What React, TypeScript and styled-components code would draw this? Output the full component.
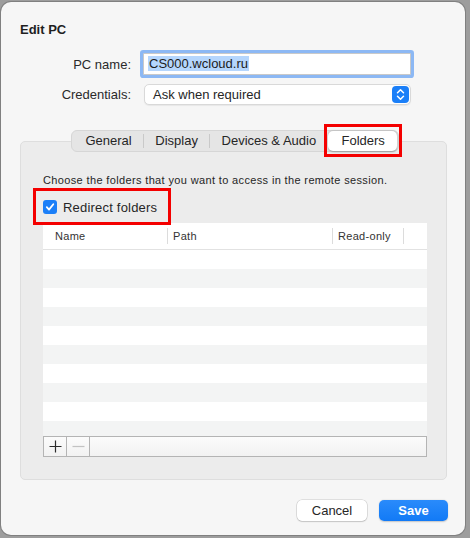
import React from 'react';
import styled, { createGlobalStyle } from 'styled-components';

const GlobalStyle = createGlobalStyle`
  html, body {
    margin: 0;
    padding: 0;
    background: #9d9d9d;
  }
  body {
    font-family: "Liberation Sans", Arial, sans-serif;
    color: #262626;
    -webkit-font-smoothing: antialiased;
  }
  * { box-sizing: border-box; }
`;

const Backdrop = styled.div`
  width: 470px;
  height: 538px;
  padding: 2px 0 0 1px;
`;

const Window = styled.div`
  width: 464px;
  height: 533px;
  background: #f6f6f6;
  border-radius: 10px;
  box-shadow: 0 0 0 1px rgba(0, 0, 0, 0.18);
  padding: 20px 18px 14px 19px;
  display: flex;
  flex-direction: column;
`;

const Title = styled.div`
  font-size: 13px;
  font-weight: 700;
  line-height: 16px;
  color: #1f1f1f;
`;

const Form = styled.div`
  display: grid;
  grid-template-columns: 111px 269px;
  column-gap: 11px;
  row-gap: 9px;
  margin-top: 15px;
  align-items: center;
`;

const Label = styled.div`
  font-size: 13px;
  text-align: right;
  color: #2a2a2a;
`;

const TextField = styled.div`
  height: 22px;
  background: #fff;
  border: 1px solid #c9c9c9;
  box-shadow: 0 0 0 3px #8cb8f4;
  border-radius: 1px;
  margin-left: 1px;
  font-size: 13px;
  line-height: 20px;
  padding-left: 4px;
`;

const Selection = styled.span`
  background: #b5d6fd;
  color: #1c1c1c;
  padding: 0 1px;
`;

const Popup = styled.div`
  height: 21px;
  background: #fff;
  border: 1px solid #d9d9d9;
  border-radius: 5px;
  box-shadow: 0 1px 1px rgba(0, 0, 0, 0.06);
  display: flex;
  align-items: center;
  justify-content: space-between;
  padding: 0 1px 0 8px;
  margin-left: 2px;
  font-size: 13px;
`;

const Stepper = styled.div`
  width: 17px;
  height: 17px;
  border-radius: 4px;
  background: #1b7ff8;
  display: flex;
  align-items: center;
  justify-content: center;
`;

const TabBar = styled.div`
  display: flex;
  justify-content: center;
  margin: 25px 0 -11px 3px;
  position: relative;
  z-index: 1;
`;

const Segmented = styled.div`
  display: flex;
  height: 22px;
  background: #e5e5e5;
  border: 1px solid #d6d6d6;
  border-radius: 6px;
  padding: 0 1px;
  align-items: center;
`;

const Tab = styled.div<{ $selected?: boolean; $divider?: boolean; $marked?: boolean }>`
  position: relative;
  height: ${({ $selected }) => ($selected ? '20px' : '14px')};
  line-height: ${({ $selected }) => ($selected ? '20px' : '14px')};
  padding: 0 ${({ $selected }) => ($selected ? '12px' : '11.3px')};
  font-size: 13px;
  color: #262626;
  border-left: 1px solid ${({ $divider }) => ($divider ? '#c9c9c9' : 'transparent')};
  background: ${({ $selected }) => ($selected ? '#fff' : 'transparent')};
  border-radius: ${({ $selected }) => ($selected ? '5px' : '0')};
  box-shadow: ${({ $selected }) => ($selected ? '0 0.5px 2px rgba(0,0,0,0.3)' : 'none')};
  margin-left: ${({ $selected }) => ($selected ? '1px' : '0')};

  &::after {
    content: '';
    display: ${({ $marked }) => ($marked ? 'block' : 'none')};
    position: absolute;
    inset: -7px -5px -6px -5px;
    border: 3px solid #f40000;
  }
`;

const Panel = styled.div`
  height: 339px;
  background: #ececec;
  border: 1px solid #dedede;
  border-radius: 5px;
  padding: 31px 20px 22px 22px;
  display: flex;
  flex-direction: column;
`;

const Hint = styled.div`
  font-size: 11px;
  line-height: 14px;
  letter-spacing: 0.36px;
  color: #262626;
`;

const CheckRow = styled.label`
  position: relative;
  display: inline-flex;
  align-self: flex-start;
  align-items: center;
  gap: 6px;
  height: 14px;
  margin-top: 13px;
  font-size: 13px;
  letter-spacing: 0.2px;

  &::after {
    content: '';
    position: absolute;
    inset: -12px -14px -11px -10px;
    border: 3px solid #f40000;
  }
`;

const CheckBox = styled.span`
  width: 14px;
  height: 14px;
  border-radius: 3px;
  background: #1b7ff8;
  display: flex;
  align-items: center;
  justify-content: center;
`;

const Table = styled.div`
  margin-top: 9px;
  width: 384px;
  display: flex;
  flex-direction: column;
`;

const HeaderRow = styled.div`
  display: grid;
  grid-template-columns: 124px 165px 71px 1fr;
  align-items: center;
  height: 27px;
  background: #fff;
  border-bottom: 1px solid #e2e2e2;
`;

const HeaderCell = styled.div<{ $divider?: boolean; $pad: number }>`
  height: 16px;
  line-height: 16px;
  font-size: 11px;
  letter-spacing: 0.3px;
  color: #333;
  padding-left: ${({ $pad }) => $pad}px;
  border-left: 1px solid ${({ $divider }) => ($divider ? '#dcdcdc' : 'transparent')};
`;

const Rows = styled.div`
  height: 186px;
  overflow: hidden;
`;

const Row = styled.div<{ $odd: boolean }>`
  height: 19px;
  background: ${({ $odd }) => ($odd ? '#f3f4f4' : '#fff')};
`;

const ToolBar = styled.div`
  display: flex;
  height: 21px;
  border: 1px solid #b4b4b4;
  background: linear-gradient(#fbfbfb, #f2f2f2);
`;

const ToolButton = styled.div`
  width: 23px;
  border-right: 1px solid #b4b4b4;
  display: flex;
  align-items: center;
  justify-content: center;
`;

const Footer = styled.div`
  display: flex;
  justify-content: flex-end;
  gap: 12px;
  margin-top: 20px;
  margin-right: -1px;
`;

const Button = styled.div<{ $primary?: boolean }>`
  width: ${({ $primary }) => ($primary ? '69px' : '70px')};
  height: 21px;
  border-radius: 5px;
  font-size: 13px;
  line-height: 21px;
  text-align: center;
  color: ${({ $primary }) => ($primary ? '#fff' : '#262626')};
  font-weight: ${({ $primary }) => ($primary ? 600 : 400)};
  background: ${({ $primary }) => ($primary ? 'linear-gradient(#2a8bfb, #127af6)' : '#fff')};
  box-shadow: ${({ $primary }) =>
    $primary ? '0 0.5px 1.5px rgba(0,0,0,0.2)' : '0 0 0 0.5px rgba(0,0,0,0.18), 0 1px 1.5px rgba(0,0,0,0.12)'};
`;

const StepperIcon = () => (
  <svg width="9" height="13" viewBox="0 0 9 13">
    <path d="M1.5 4.8 L4.5 1.8 L7.5 4.8 M1.5 8.2 L4.5 11.2 L7.5 8.2" stroke="#fff" strokeWidth="1.5" fill="none" strokeLinecap="round" strokeLinejoin="round" />
  </svg>
);

const CheckIcon = () => (
  <svg width="10" height="10" viewBox="0 0 10 10">
    <path d="M1.8 5.2 L4 7.6 L8.3 2.3" stroke="#fff" strokeWidth="1.8" fill="none" strokeLinecap="round" strokeLinejoin="round" />
  </svg>
);

const PlusIcon = ({ color }: { color: string }) => (
  <svg width="13" height="13" viewBox="0 0 13 13">
    <path d="M6.5 0.5 V12.5 M0.5 6.5 H12.5" stroke={color} strokeWidth="1.2" />
  </svg>
);

const MinusIcon = ({ color }: { color: string }) => (
  <svg width="13" height="13" viewBox="0 0 13 13">
    <path d="M0.5 6.5 H12.5" stroke={color} strokeWidth="1.2" />
  </svg>
);

const tabs = ['General', 'Display', 'Devices & Audio', 'Folders'];

export default function App() {
  return (
    <>
      <GlobalStyle />
      <Backdrop>
        <Window>
          <Title>Edit PC</Title>
          <Form>
            <Label>PC name:</Label>
            <TextField>
              <Selection>CS000.wcloud.ru</Selection>
            </TextField>
            <Label>Credentials:</Label>
            <Popup>
              <span>Ask when required</span>
              <Stepper>
                <StepperIcon />
              </Stepper>
            </Popup>
          </Form>
          <TabBar>
            <Segmented>
              {tabs.map((t, i) => (
                <Tab
                  key={t}
                  $selected={t === 'Folders'}
                  $marked={t === 'Folders'}
                  $divider={i > 0 && t !== 'Folders'}
                >
                  {t}
                </Tab>
              ))}
            </Segmented>
          </TabBar>
          <Panel>
            <Hint>Choose the folders that you want to access in the remote session.</Hint>
            <CheckRow>
              <CheckBox>
                <CheckIcon />
              </CheckBox>
              Redirect folders
            </CheckRow>
            <Table>
              <HeaderRow>
                <HeaderCell $pad={11}>Name</HeaderCell>
                <HeaderCell $pad={5} $divider>Path</HeaderCell>
                <HeaderCell $pad={5} $divider>Read-only</HeaderCell>
                <HeaderCell $pad={0} $divider />
              </HeaderRow>
              <Rows>
                {Array.from({ length: 10 }, (_, i) => (
                  <Row key={i} $odd={i % 2 === 1} />
                ))}
              </Rows>
              <ToolBar>
                <ToolButton>
                  <PlusIcon color="#2b2b2b" />
                </ToolButton>
                <ToolButton>
                  <MinusIcon color="#c2c2c2" />
                </ToolButton>
              </ToolBar>
            </Table>
          </Panel>
          <Footer>
            <Button>Cancel</Button>
            <Button $primary>Save</Button>
          </Footer>
        </Window>
      </Backdrop>
    </>
  );
}
